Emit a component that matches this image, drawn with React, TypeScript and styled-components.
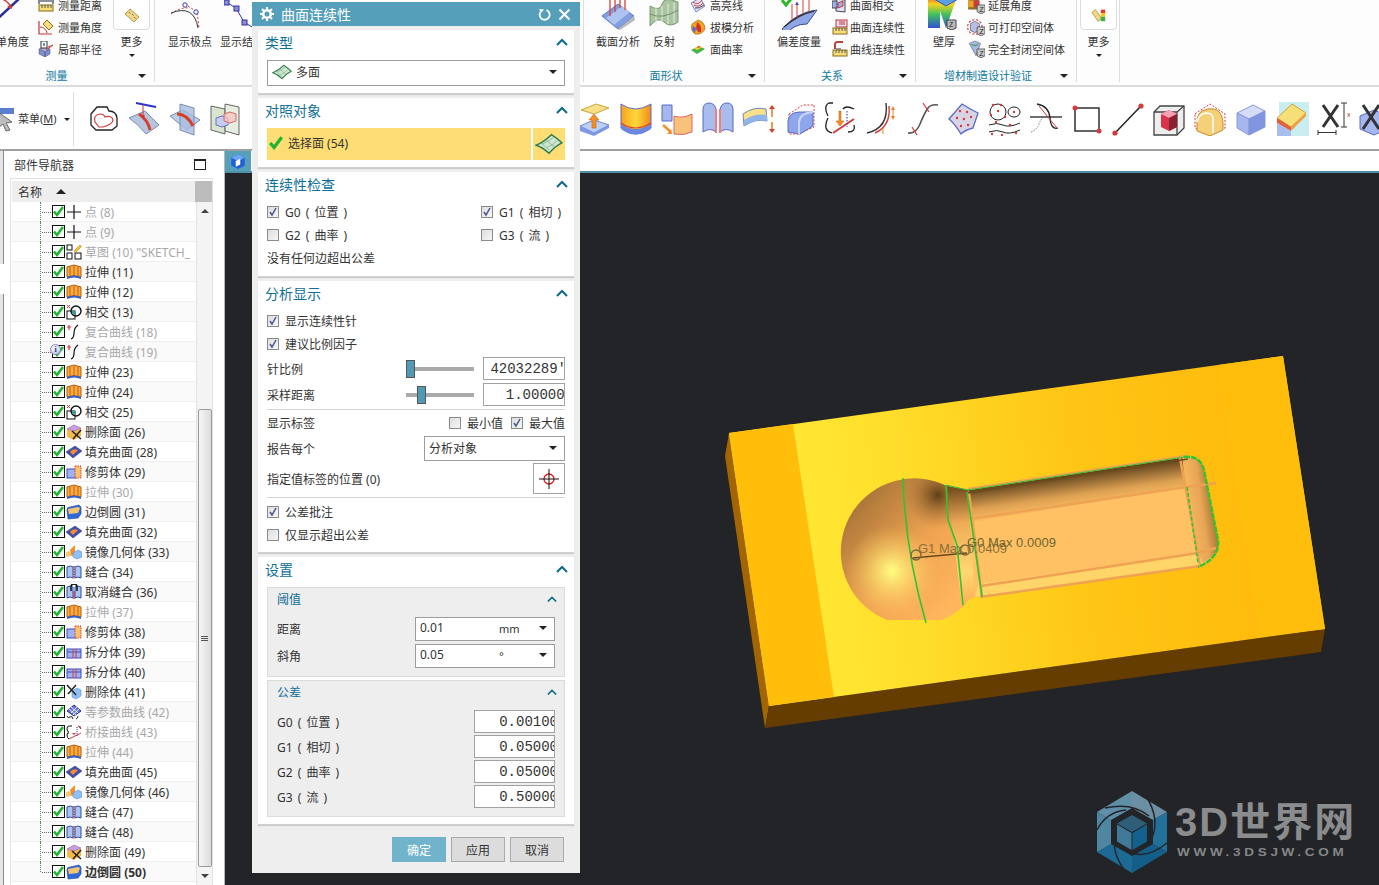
import React from "react";
import styled, { createGlobalStyle } from "styled-components";

const Global = createGlobalStyle`
  html, body { margin: 0; padding: 0; background: #fff; overflow: hidden; }
  * { box-sizing: border-box; }
  body { font-family: "Noto Sans", "Noto Sans CJK SC", sans-serif; color: #333; font-size: 12px; }
`;

const Page = styled.div`
  position: relative; width: 1379px; height: 885px; overflow: hidden; background: #fff;
  display: flex; flex-direction: column;
`;

/* ---------- ribbon ---------- */
const Ribbon = styled.div`
  height: 87px; flex: none; overflow: hidden; background: #fdfdfd; border-bottom: 2px solid #dcdcdc;
`;
const RibbonRow = styled.div`
  display: flex; margin-top: -6px; margin-left: -15px; width: 1500px; font-size: 11px;
`;
const RibbonGroup = styled.section<{ $w: number; $pl?: number; $last?: boolean }>`
  width: ${(p) => p.$w}px; flex: none; height: 88px; display: flex; flex-direction: column;
  border-right: ${(p) => (p.$last ? "none" : "1px solid #dedede")};
  padding-left: ${(p) => p.$pl ?? 0}px;
`;
const GroupBody = styled.div<{ $gap?: number }>`
  height: 71px; display: flex; gap: ${(p) => p.$gap ?? 0}px; align-items: flex-start;
`;
const GroupFoot = styled.div<{ $pl: number; $pr?: number }>`
  height: 17px; display: flex; margin-left: ${(p) => -p.$pl}px; line-height: 22px; color: #0d7a9f;
`;
const FootLabel = styled.span<{ $shift?: number }>`
  flex: 1; text-align: center; padding-right: ${(p) => p.$shift ?? 0}px;
`;
const Caret = styled.i<{ $size?: number }>`
  display: inline-block; flex: none; width: 0; height: 0;
  border-left: ${(p) => p.$size ?? 4}px solid transparent;
  border-right: ${(p) => p.$size ?? 4}px solid transparent;
  border-top: ${(p) => p.$size ?? 4}px solid #222;
`;
const FootCaret = styled(Caret)`
  margin: 9px 8px 0 0;
`;
const BigButton = styled.div<{ $w: number; $mr?: number }>`
  width: ${(p) => p.$w}px; flex: none; margin-right: ${(p) => p.$mr ?? 0}px;
  display: flex; flex-direction: column; align-items: center; white-space: nowrap;
`;
const BigIcon = styled.div`
  height: 36px; display: flex; align-items: flex-end; justify-content: center;
`;
const BigLabel = styled.div`
  height: 24px; line-height: 24px; color: #333;
`;
const MoreBox = styled.div`
  width: 37px; height: 36px; border: 1px solid #dcdcdc; border-radius: 4px; background: #fff;
  display: flex; align-items: center; justify-content: center; padding-top: 6px;
`;
const SmallColumn = styled.div<{ $mr?: number }>`
  display: flex; flex-direction: column; margin-right: ${(p) => p.$mr ?? 0}px;
`;
const SmallItem = styled.div<{ $gap: number }>`
  height: 22px; display: flex; align-items: center; gap: ${(p) => p.$gap}px; white-space: nowrap; color: #333;
`;

const Svg: React.FC<{ s?: number; w?: number; h?: number; v: string; children: React.ReactNode }> = ({ s = 16, w, h, v, children }) => (
  <svg width={w ?? s} height={h ?? s} viewBox={v} style={{ display: "block", flex: "none" }}>{children}</svg>
);

/* ribbon icons */
const IcAngleBig = () => (
  <Svg w={30} h={36} v="0 0 30 36">
    <path d="M0 30 L29 3" stroke="#2a2f9c" strokeWidth="2.5" />
    <path d="M4 4 Q14 4 19 13" stroke="#d63a3a" strokeWidth="1.5" fill="none" />
    <path d="M20 15 l-5 -2 l4 -3z" fill="#d63a3a" />
  </Svg>
);
const IcDist = () => (
  <Svg v="0 0 16 16">
    <path d="M1 1v6M15 1v6" stroke="#111" />
    <path d="M2 4h12" stroke="#223" />
    <rect x="1" y="8" width="14" height="6" fill="#f6dd78" stroke="#8a6d1d" />
    <path d="M4 8v3M7 8v3M10 8v3M13 8v3" stroke="#555" />
  </Svg>
);
const IcMAngle = () => (
  <Svg v="0 0 16 16">
    <path d="M1 2V15H14" fill="none" stroke="#c9332e" strokeWidth="1.2" />
    <path d="M2 8 A7 7 0 0 1 9 14" fill="none" stroke="#c9332e" />
    <path d="M5 5l4-4 6 6-4 4z" fill="#f6dd78" stroke="#8a6d1d" />
  </Svg>
);
const IcRadius = () => (
  <Svg v="0 0 16 16">
    <path d="M1 8l6-2 5 2-5 3z" fill="#a4b4e8" stroke="#555" strokeWidth=".5" />
    <path d="M1 8v5l6 3v-5zM7 11v5l5-3V8z" fill="#7b8fd6" stroke="#555" strokeWidth=".5" />
    <rect x="3" y="0" width="6" height="7" fill="#fff" stroke="#333" />
    <path d="M6 2v3" stroke="#2a5fb0" strokeWidth="1.4" />
    <path d="M8 9L15 4 10 6" stroke="#d63a3a" fill="none" />
  </Svg>
);
const IcRuler = () => (
  <Svg v="0 0 16 16">
    <path d="M1 7L6 2 15 10 10 15z" fill="#f0d888" stroke="#b6994a" />
    <path d="M5 5l1.5 1.5M8 7l1.5 1.5M10 10l1.5 1.5" stroke="#666" />
  </Svg>
);
const IcRulerRainbow = () => (
  <Svg v="0 0 18 18">
    <path d="M1 6L5 3 12 13 8 16z" fill="#f0d888" stroke="#b6994a" />
    <rect x="11" y="3" width="5" height="4" fill="#e23b2e" />
    <rect x="11" y="7" width="5" height="4" fill="#f7c325" />
    <rect x="11" y="11" width="5" height="5" fill="#3fb24a" />
  </Svg>
);
const IcPoles = () => (
  <Svg w={40} h={30} v="0 0 40 30">
    <path d="M1 14 Q10 7 20 8" stroke="#c33" strokeDasharray="2 2" fill="none" />
    <circle cx="15" cy="5" r="2.2" fill="#fff" stroke="#33a" />
    <path d="M1 13 Q24 4 28 28" stroke="#333" fill="none" />
    <path d="M18 6 L27 12 L29 28" stroke="#c33" strokeDasharray="2 2" fill="none" />
    <circle cx="26" cy="12" r="2.2" fill="#fff" stroke="#33a" />
  </Svg>
);
const IcKnots = () => (
  <Svg w={36} h={30} v="0 0 36 30">
    <path d="M2 2 L12 8 L20 22 L28 27" stroke="#33a" fill="none" />
    <rect x="0" y="0" width="5" height="5" fill="#8a8ad8" stroke="#33a" />
    <rect x="10" y="6" width="5" height="5" fill="#8a8ad8" stroke="#33a" />
    <rect x="18" y="20" width="5" height="5" fill="#8a8ad8" stroke="#33a" />
  </Svg>
);
const IcSection = () => (
  <Svg w={36} h={36} v="0 0 36 36">
    <path d="M2 22 L18 10 L34 22 L18 35z" fill="#7f9fe0" stroke="#5c77c0" />
    <path d="M6 24L22 12l8 6-16 13z" fill="#aec3ef" />
    <path d="M10 22V4M15 18V1M20 14V1M25 16V4" stroke="#d6403a" strokeWidth="1.3" />
    <path d="M10 5 Q17 -2 25 5" stroke="#d6403a" fill="none" />
    <path d="M18 35 L34 22 L35 26 L20 36z" fill="#b8b8b8" />
  </Svg>
);
const IcReflect = () => (
  <Svg w={32} h={30} v="0 0 32 30">
    <path d="M2 6 Q12 12 14 4 T30 2 L30 22 Q22 28 16 22 T2 26z" fill="#a9c49f" stroke="#7a9a72" />
    <path d="M8 8v18M14 6v18M20 4v20M26 3v20" stroke="#e6efe0" />
    <path d="M2 14 Q14 20 30 10" stroke="#6e8e64" fill="none" />
  </Svg>
);
const IcHigh = () => (
  <Svg v="0 0 16 16">
    <path d="M1 6L10 1 15 9 6 15z" fill="#dfe3f6" stroke="#7a86c8" />
    <path d="M3 5Q8 9 12 3M4 8Q9 11 13 6" stroke="#d6403a" fill="none" />
    <path d="M5 11Q9 12 14 8" stroke="#444" fill="none" />
  </Svg>
);
const IcDraft = () => (
  <Svg v="0 0 16 16">
    <path d="M8 1Q15 3 15 10 12 16 5 15 0 11 2 5z" fill="#f5a41d" stroke="#8a5a10" strokeWidth=".6" />
    <path d="M7 3Q12 6 11 13 7 14 6 9z" fill="#d2322e" />
    <path d="M3 7l3 2-1 5-3-3z" fill="#5a6ad0" />
  </Svg>
);
const IcCurv = () => (
  <Svg v="0 0 16 16">
    <path d="M1 9L9 5 15 8 7 13z" fill="#46b04d" />
    <path d="M4 7.5L9 5 12 6.5 7 9z" fill="#f3d321" />
    <path d="M7 6.2L9 5 10.5 5.8 8.5 7z" fill="#e23b2e" />
  </Svg>
);
const IcDeviation = () => (
  <Svg w={40} h={36} v="0 0 40 36">
    <path d="M3 35 Q18 18 38 16 L28 30 Q14 30 8 40z" fill="#8fa6e6" stroke="#3a4c96" />
    <path d="M5 33 Q20 20 35 17" stroke="#333" strokeWidth="1.4" fill="none" />
    <path d="M13 10v16M18 8v16M24 4v16M30 6v12" stroke="#d6403a" />
    <path d="M18 8l-2 3h4zM24 2l-2 3h4z" fill="#3250c0" />
    <path d="M3 6l4 5 9-11" fill="none" stroke="#2eb82e" strokeWidth="3" />
  </Svg>
);
const IcFaceX = () => (
  <Svg v="0 0 16 16">
    <path d="M4 2l9 1v12l-9-1z" fill="#e0e4f5" stroke="#445" />
    <path d="M6 6l5-2v5l-5 2z" fill="#9eb0e6" stroke="#c33" />
    <rect x="0" y="4" width="5" height="7" fill="#9eb0e6" stroke="#445" />
  </Svg>
);
const IcFaceCont = () => (
  <Svg v="0 0 16 16">
    <rect x="4" y="1" width="11" height="7" fill="#dde2f4" stroke="#c33" />
    <path d="M7 3h6M7 5h6" stroke="#c33" />
    <rect x="1" y="9" width="14" height="6" fill="#f6dd78" stroke="#8a6d1d" />
    <path d="M4 9v3M7 9v3M10 9v3M13 9v3" stroke="#555" />
  </Svg>
);
const IcCurveCont = () => (
  <Svg v="0 0 16 16">
    <path d="M3 8V3Q3 1 6 1h5" fill="none" stroke="#b5443c" strokeWidth="2" />
    <path d="M4 8h5" stroke="#333" />
    <rect x="1" y="9" width="14" height="6" fill="#f6dd78" stroke="#8a6d1d" />
    <path d="M4 9v3M7 9v3M10 9v3M13 9v3" stroke="#555" />
  </Svg>
);
const IcWall = () => (
  <Svg w={32} h={36} v="0 0 32 36">
    <defs>
      <linearGradient id="wallg" x1="0" y1="0" x2="0" y2="1">
        <stop offset="0" stopColor="#e53828" /><stop offset=".3" stopColor="#f7d321" />
        <stop offset=".6" stopColor="#3fc25a" /><stop offset="1" stopColor="#3050d8" />
      </linearGradient>
    </defs>
    <path d="M0 0H12V34H0z" fill="url(#wallg)" />
    <path d="M6 0H30L18 34z" fill="url(#wallg)" />
    <path d="M6 5L18 -1 30 5 18 12z" fill="#5aa0e0" stroke="#2a5fb0" />
    <path d="M19 26h9v8l-4 2-5-2z" fill="#bbb" stroke="#444" />
    <text x="21" y="33" fontSize="7" fill="#222" fontFamily="Liberation Sans">Z</text>
  </Svg>
);
const ZBadge = () => (
  <>
    <path d="M9 8h7v6l-3.5 2L9 14z" fill="#ccc" stroke="#444" strokeWidth=".7" />
    <text x="10.8" y="14" fontSize="6.5" fill="#222" fontFamily="Liberation Sans">Z</text>
  </>
);
const IcExt = () => (
  <Svg s={18} v="0 0 16 16">
    <path d="M1 4L6 2l5 2v8H1z" fill="#8c6a2c" /><path d="M1 4h5v6H1z" fill="#e8a22a" />
    <path d="M6 4h5v6H6z" fill="#cf3a3a" /><ZBadge />
  </Svg>
);
const IcPrint = () => (
  <Svg s={18} v="0 0 16 16">
    <circle cx="7" cy="8" r="6.5" fill="none" stroke="#d63a3a" strokeDasharray="2 1.5" />
    <path d="M3 5l4-2 4 2v6l-4 2-4-2z" fill="#b7bfe8" stroke="#555" strokeWidth=".6" />
    <ZBadge />
  </Svg>
);
const IcClosed = () => (
  <Svg s={18} v="0 0 16 16">
    <path d="M2 3l5-2 5 2-4 11z" fill="#aab8e6" stroke="#667" strokeWidth=".6" />
    <path d="M4 4l3 1 3-1" stroke="#3aa05a" fill="none" />
    <ZBadge />
  </Svg>
);

const Small: React.FC<{ icon: React.ReactNode; gap: number; children: React.ReactNode }> = ({ icon, gap, children }) => (
  <SmallItem $gap={gap}>{icon}<span>{children}</span></SmallItem>
);

/* ---------- toolbar ---------- */
const Toolbar = styled.div`
  height: 64px; flex: none; display: flex; align-items: center; overflow: hidden; background: #fff;
  border-bottom: 2px solid #a0a0a0;
`;
const MenuButton = styled.div`
  width: 74px; height: 54px; flex: none; display: flex; align-items: center; border-right: 1px solid #ddd;
  font-size: 11px; margin-right: 9px; margin-top: 2px;
`;
const MenuLabel = styled.span`
  margin-left: 2px; margin-right: 7px; white-space: nowrap; padding-bottom: 2px;
  u { text-decoration: underline; }
`;
const ToolIcon = styled.div`
  width: 41px; height: 36px; flex: none; display: flex; align-items: center; justify-content: center; margin-top: 2px;
`;
const ToolGap = styled.div`
  width: 327px; flex: none;
`;
const T: React.FC<{ children: React.ReactNode }> = ({ children }) => (
  <ToolIcon><Svg s={34} v="0 0 34 34">{children}</Svg></ToolIcon>
);
const toolLeft = [
  <T key="a"><path d="M4 12L10 5H20L22 9Q29 9 30 16V24L25 28H9L4 23z" fill="#fff" stroke="#222" strokeWidth="1.3" /><path d="M8 20Q6 13 13 12 17 12 18 15 25 13 26 18 26 22 16 25H12z" fill="#fff" stroke="#d63a3a" strokeWidth="1.2" /></T>,
  <T key="b"><path d="M8 1l20 4" stroke="#2a35d0" strokeWidth="2" /><path d="M1 16L17 9 31 23 18 32Q10 22 1 16z" fill="#b6c6e0" stroke="#7a8cb0" /><path d="M11 12Q20 18 22 28" stroke="#d6402a" strokeWidth="3" fill="none" /><path d="M15 3v12" stroke="#c33" /><path d="M15 17l-2-4h4z" fill="#c33" /></T>,
  <T key="c"><path d="M1 14L14 8 31 18 18 28z" fill="#bcd0ea" stroke="#7a8cb0" /><path d="M11 2l14 4v27l-14-5z" fill="#a8bde0" fillOpacity=".8" stroke="#7a8cb0" /><path d="M8 12Q18 12 24 24" stroke="#d6402a" strokeWidth="3" fill="none" /></T>,
  <T key="d"><path d="M1 4l14 3v25L1 28z" fill="#d8e6d0" stroke="#666" /><path d="M15 2l14 3v28l-14-4z" fill="#dfead8" fillOpacity=".8" stroke="#666" /><path d="M6 16l6-2 6 2v7l-6 2-6-2z" fill="#c6cdf2" stroke="#6a74c0" /><path d="M14 12l6-2 6 2v7l-6 2-6-2z" fill="#f4c6c0" fillOpacity=".8" stroke="#d66" /></T>,
];
const toolRight = [
  <T key="1"><path d="M3 8L18 2l13 4-15 6z" fill="#f7df88" stroke="#c9a83a" /><path d="M2 24L16 18l15 5-15 8z" fill="#bcd0f5" stroke="#6e86d0" /><path d="M2 24v5l14 5 15-8v-3l-15 8z" fill="#7e98e6" /><path d="M14 26v-8h-3l5-6 5 6h-3v8z" fill="#f59028" stroke="#b35a00" strokeWidth=".5" /></T>,
  <T key="2"><defs><linearGradient id="tl2" x1="0" x2="1"><stop offset="0" stopColor="#f7a020" /><stop offset=".5" stopColor="#ffd83a" /><stop offset="1" stopColor="#f08a1a" /></linearGradient></defs><path d="M2 2Q16 12 32 2V26Q16 38 2 26z" fill="url(#tl2)" stroke="#5a6ac0" /><path d="M2 22Q16 32 32 22V27Q16 38 2 27z" fill="#6d87e0" /><path d="M2 21Q16 31 32 21" stroke="#d6402a" strokeWidth="1.2" fill="none" /></T>,
  <T key="3"><path d="M2 3h10v16H2z" fill="#a4b8ee" stroke="#5a6ac0" /><path d="M14 14q8 3 18-2v18q-9 4-18 2z" fill="#f9c27a" stroke="#d66" /><path d="M3 23l8 7" stroke="#f59028" strokeWidth="2.5" /><path d="M12 32l-5 0 4-5z" fill="#f59028" /></T>,
  <T key="4"><path d="M2 30V8Q2 1 8 1t7 7v22q-6-5-13 0z" fill="#a8bcee" stroke="#5a6ac0" /><path d="M32 30V8Q32 1 26 1t-7 7v22q6-5 13 0z" fill="#a8bcee" stroke="#5a6ac0" /><path d="M15 7v24M19 7v24" stroke="#f08080" strokeWidth="2" /></T>,
  <T key="5"><path d="M1 12Q12 4 24 7l1 12Q14 16 2 24z" fill="#fbe08a" stroke="#6d87c0" /><path d="M2 18Q14 11 25 13l0 6Q14 16 2 24z" fill="#8fb4e8" /><path d="M30 6v9M30 20v9" stroke="#e88428" strokeWidth="1.6" /><path d="M30 3l-3 4h6zM30 31l-3-4h6z" fill="#d6402a" /></T>,
  <T key="6"><path d="M6 12L20 3h11v22L15 32H6z" fill="none" stroke="#d63a3a" strokeDasharray="2 1.5" /><path d="M5 30V19Q6 10 17 10H30v14L17 32z" fill="#8ea6ec" stroke="#5a6ac0" /><path d="M16 32V20q1-9 14-10" stroke="#c8d4f8" strokeWidth="2" fill="none" /></T>,
  <T key="7"><path d="M4 14Q-1 4 5 1h4M4 16Q-2 28 8 31" stroke="#222" strokeWidth="1.3" fill="none" /><path d="M30 7Q22 3 19 7M24 30q8 0 6-7" stroke="#222" strokeWidth="1.3" fill="none" /><path d="M9 31l21-14" stroke="#d63a3a" strokeWidth="2" /><path d="M23 9v16" stroke="#33a" strokeDasharray="1.5 1.5" /><path d="M15 9v10h-3l4 5 4-5h-3V9z" fill="#f59028" stroke="#b35a00" strokeWidth=".5" /></T>,
  <T key="8"><path d="M2 31Q24 26 21 1" stroke="#333" strokeWidth="1.4" fill="none" /><path d="M10 31Q26 24 24 4" stroke="#d63a3a" strokeWidth="1.4" fill="none" /><path d="M28 6v10" stroke="#e88428" /><path d="M28 4l-2 4h4zM28 18l-2-4h4z" fill="#e88428" /><path d="M18 26v6" stroke="#e88428" /></T>,
  <T key="9"><path d="M2 31Q10 32 14 22T22 6q3-4 10-3" stroke="#555" strokeWidth="1.6" fill="none" /><path d="M6 25l5 8M17 1l6 9" stroke="#d63a3a" strokeWidth="1.2" /></T>,
  <T key="10"><path d="M2 17L15 2q8 5 16 9L26 26q-8 2-12 6Q8 22 2 17z" fill="#d9d3e6" stroke="#5a6ac0" strokeWidth="1.3" /><g fill="#d63a3a"><circle cx="13" cy="9" r="1.2" /><circle cx="20" cy="10" r="1.2" /><circle cx="10" cy="16" r="1.2" /><circle cx="17" cy="17" r="1.2" /><circle cx="24" cy="15" r="1.2" /><circle cx="14" cy="24" r="1.2" /><circle cx="21" cy="23" r="1.2" /></g></T>,
  <T key="11"><ellipse cx="10" cy="10" rx="8" ry="8" fill="none" stroke="#222" /><ellipse cx="26" cy="10" rx="6" ry="5" fill="none" stroke="#222" /><path d="M1 23q8-3 14 0t17-2M1 30q8-3 14 0t17-2" stroke="#222" fill="none" /><g fill="#d63a3a"><circle cx="5" cy="3" r="1.2" /><circle cx="13" cy="3" r="1.2" /><circle cx="10" cy="9" r="1.2" /><circle cx="3" cy="13" r="1.2" /><circle cx="26" cy="10" r="1.2" /><circle cx="17" cy="15" r="1.2" /><circle cx="8" cy="20" r="1.2" /><circle cx="22" cy="23" r="1.2" /><circle cx="4" cy="32" r="1.2" /><circle cx="14" cy="33" r="1.2" /><circle cx="28" cy="31" r="1.2" /></g></T>,
  <T key="12"><path d="M8 2q12 2 13 14t8 10" stroke="#222" strokeWidth="1.3" fill="none" /><path d="M1 15h32" stroke="#222" strokeWidth="1.3" /><path d="M10 4l18 22" stroke="#d63a3a" strokeWidth="1" /><path d="M2 30q6-2 8-8t6-7" stroke="#777" strokeDasharray="1.5 1.2" fill="none" /></T>,
  <T key="13"><rect x="5" y="6" width="24" height="23" fill="none" stroke="#222" strokeWidth="1.4" /><circle cx="5" cy="6" r="2.5" fill="#d63a3a" /><circle cx="29" cy="29" r="2.5" fill="#d63a3a" /></T>,
  <T key="14"><path d="M4 31L30 4" stroke="#222" strokeWidth="1.5" /><circle cx="4" cy="31" r="2.6" fill="#d63a3a" /><circle cx="30" cy="4" r="2.6" fill="#d63a3a" /></T>,
  <T key="15"><path d="M8 4h24v22l-7 7H2V10z" fill="#eee" stroke="#444" strokeWidth="1.3" /><path d="M2 10h23v23M25 10l7-6" stroke="#444" strokeWidth="1.3" fill="none" /><path d="M9 12l8-4 8 4v13l-8 4-8-4z" fill="#d8334a" /><path d="M9 12l8-4 8 4-8 4z" fill="#f6a0b4" /><path d="M17 16v13l8-4V12z" fill="#8a2030" /></T>,
  <T key="16"><path d="M2 12l15-10 15 10v14L17 33 2 26z" fill="none" stroke="#d63a3a" strokeDasharray="2 1.5" /><path d="M4 29V19Q5 9 12 8q3-2 9-1 8 2 9 13v8L17 34z" fill="#f6d078" stroke="#c88a2a" /><path d="M4 20q2-8 9-9 7 0 7 6v14" stroke="#fff" strokeWidth="1.5" fill="none" /></T>,
  <T key="17"><path d="M3 11L19 3l12 6-16 8z" fill="#d5dcf8" stroke="#8a98d8" /><path d="M3 11v15l12 7V17z" fill="#a6b6ee" stroke="#8a98d8" /><path d="M15 17v16l16-8V9z" fill="#7f95e0" stroke="#8a98d8" /></T>,
  <T key="18"><rect x="4" y="0" width="30" height="34" fill="#c8eef2" /><path d="M2 16L17 2l14 9-15 14z" fill="#f7df78" stroke="#d6a040" /><path d="M2 16l14 9v4L2 21z" fill="#e2603a" /><path d="M16 25l15-14v3L16 29z" fill="#f0a040" /><path d="M2 21l14 8v5H2z" fill="#a8bcee" /></T>,
  <T key="19"><path d="M7 3l15 22M22 3L7 25" stroke="#333" strokeWidth="3" /><path d="M2 28v5M20 28v5M2 30.500h18M25 1h6M25 25h6M28 1v24" stroke="#333" /><text x="31" y="15" fontSize="8" fill="#c33" fontFamily="Liberation Sans">x</text></T>,
  <T key="20"><path d="M3 14l14-6 14 6v13l-14 6-14-6z" fill="#a6b6ee" stroke="#5a6ac0" /><path d="M6 3l16 24M22 3L6 27" stroke="#333" strokeWidth="3" /></T>,
];

/* ---------- lower area ---------- */
const Main = styled.div`
  flex: 1; min-height: 0; display: flex;
`;
const Rail = styled.div`
  width: 4px; flex: none; display: flex; flex-direction: column; gap: 30px; background: #fff;
`;
const RailPiece = styled.div<{ $grow?: boolean }>`
  background: #e6e6e6; border-right: 1px solid #888;
  ${(p) => (p.$grow ? "flex: 1;" : "height: 113px;")}
`;
const Navigator = styled.aside`
  width: 221px; flex: none; display: flex; flex-direction: column; border-right: 1px solid #b8b8b8; padding-left: 6px;
`;
const NavTitle = styled.div`
  height: 27px; display: flex; align-items: center; justify-content: space-between;
  padding: 0 18px 0 4px; font-size: 12px; color: #333;
`;
const MaximizeBox = styled.span`
  width: 12px; height: 11px; border: 1px solid #222; border-top-width: 2px;
`;
const NavFrame = styled.div`
  width: 203px; flex: 1; min-height: 0; border: 1px solid #e2e2e2; border-bottom: none; padding: 2px 0 0 1px; overflow: hidden;
`;
const GridHead = styled.div`
  height: 21px; display: flex; background: #eee;
`;
const NameCell = styled.div`
  flex: 1; display: flex; align-items: center; gap: 14px; padding-left: 6px; color: #333; font-size: 12px;
`;
const UpTri = styled.i`
  width: 0; height: 0; border-left: 5px solid transparent; border-right: 5px solid transparent; border-bottom: 5px solid #222;
`;
const ScrollUp = styled.i`
  width: 0; height: 0; border-left: 4px solid transparent; border-right: 4px solid transparent; border-bottom: 4px solid #444;
`;
const HeadEnd = styled.div`
  width: 17px; background: #bcbcbc;
`;
const GridBody = styled.div`
  display: flex;
`;
const Rows = styled.div`
  width: 184px; flex: none; overflow: hidden;
`;
const TreeRow = styled.div<{ $alt: boolean }>`
  position: relative; height: 20px; display: flex; align-items: center; padding-left: 28px; white-space: nowrap;
  background: ${(p) => (p.$alt ? "#fafafa" : "#fff")}; border-bottom: 1px solid #efefef;
`;
const Connector = styled.span<{ $last?: boolean }>`
  align-self: flex-start; width: 12px; height: ${(p) => (p.$last ? "10px" : "20px")}; flex: none; position: relative;
  border-left: 1px dotted #5d8a5d;
  &::after { content: ""; position: absolute; left: 1px; top: 10px; width: 9px; border-top: 1px dotted #666; }
`;
const Check = styled.span`
  width: 13px; height: 13px; flex: none; border: 1px solid #111; background: #fff; display: flex; align-items: center; justify-content: center;
`;
const NodeIcon = styled.span`
  width: 16px; height: 16px; flex: none; margin-left: 1px; margin-right: 3px; position: relative;
`;
const InfoBadge = styled.span`
  position: absolute; left: 38px; top: 2px; width: 11px; height: 11px; border-radius: 50%;
  background: radial-gradient(circle at 40% 30%, #fff, #b9bde6); border: 1px solid #8a8ac0;
  font: bold 8px/9px "Liberation Serif", serif; color: #22307a; text-align: center;
`;
const NodeText = styled.span<{ $muted?: boolean; $bold?: boolean }>`
  color: ${(p) => (p.$muted ? "#a8a8a8" : "#333")}; font-weight: ${(p) => (p.$bold ? 700 : 400)}; font-size: 12px;
`;
const ScrollBar = styled.div`
  width: 16px; flex: none; height: 683px; display: flex; flex-direction: column; align-items: center; background: #f4f4f4; border-left: 1px solid #e2e2e2;
`;
const ScrollEnd = styled.div`
  height: 18px; flex: none; display: flex; align-items: center; justify-content: center;
`;
const ScrollSpace = styled.div`
  height: 189px; flex: none;
`;
const ScrollThumb = styled.div`
  width: 14px; flex: 1; background: linear-gradient(90deg, #f6f6f6, #dcdcdc); border: 1px solid #9a9a9a; border-radius: 2px;
  display: flex; flex-direction: column; align-items: center; justify-content: center; gap: 1px;
`;
const GripLine = styled.i`
  width: 7px; height: 1px; background: #555;
`;
const DownTri = styled(Caret)`
  border-top-color: #444;
`;

const Workspace = styled.main`
  flex: 1; min-width: 0; display: flex; flex-direction: column;
`;
const TabStrip = styled.div`
  height: 22px; flex: none; display: flex; background: #fff; border-bottom: 2px solid #4f90aa;
`;
const PartTab = styled.div`
  width: 26px; background: #58a0ba; display: flex; align-items: center; justify-content: center;
`;
const Canvas = styled.div`
  flex: 1; min-height: 0; position: relative; background: #232428;
`;
const CanvasSvg = styled.svg`
  display: block; width: 100%; height: 100%;
`;
const Watermark = styled.div`
  position: absolute; left: 871px; top: 617px; display: flex; gap: 7px; align-items: flex-start;
`;
const MarkText = styled.div`
  display: flex; flex-direction: column; margin-top: 9px;
`;
const MarkTitle = styled.div`
  font: 700 40px/46px "Liberation Sans", "Noto Sans CJK SC", sans-serif; color: #8a8c8e; white-space: nowrap; letter-spacing: 2px;
`;
const MarkSub = styled.div`
  font: 700 13.500px/14px "Liberation Sans", sans-serif; color: #858789; letter-spacing: 3.700px; white-space: nowrap; margin-top: 1px; margin-left: 2px; transform: scaleY(.8);
`;

/* ---------- dialog ---------- */
const Dialog = styled.div`
  position: absolute; left: 252px; top: 2px; width: 328px; height: 871px; background: #eee; display: flex; flex-direction: column;
`;
const TitleBar = styled.div`
  height: 24px; flex: none; background: #569fba; color: #fff; display: flex; align-items: center; padding: 0 9px 0 8px; font-size: 14px;
`;
const TitleText = styled.span`
  flex: 1; margin-left: 7px;
`;
const TitleTools = styled.div`
  display: flex; gap: 7px; align-items: center;
`;
const Sections = styled.div`
  padding: 4px 6px 0; display: flex; flex-direction: column; gap: 4px;
`;
const Section = styled.section<{ $h: number }>`
  height: ${(p) => p.$h}px; background: #fff; border-bottom: 1px solid #cfcfcf; box-shadow: 0 1px 1px #ccc; padding: 0 9px;
`;
const SectionHead = styled.header`
  height: 26px; display: flex; align-items: center; justify-content: space-between; margin-left: -2px; margin-right: -3px;
  color: #0d6f97; font-size: 14px; padding-bottom: 2px;
`;
const Chevron: React.FC<{ s?: number }> = ({ s = 12 }) => (
  <Svg w={s} h={8} v="0 0 12 8"><path d="M1 7L6 2l5 5" fill="none" stroke="#0b6a8a" strokeWidth="2" /></Svg>
);
const SelectBox = styled.div<{ $w?: number; $h?: number; $mt?: number }>`
  height: ${(p) => p.$h ?? 26}px; width: ${(p) => (p.$w ? p.$w + "px" : "100%")}; margin-top: ${(p) => p.$mt ?? 0}px;
  border: 1px solid #9c9c9c; background: #fff; display: flex; align-items: center; padding: 0 7px 2px 4px; gap: 4px; font-size: 12px; color: #333; flex: none;
`;
const Grow = styled.span`
  flex: 1;
`;
const YellowRow = styled.div`
  margin-top: 4px; height: 32px; display: flex; gap: 2px;
`;
const YellowBar = styled.div`
  flex: 1; background: #fedd75; display: flex; align-items: center; gap: 5px; padding: 0 0 2px 2px; font-size: 12px; color: #333;
`;
const YellowButton = styled.div`
  width: 32px; background: #fedd75; display: flex; align-items: center; justify-content: center;
`;
const Row = styled.div<{ $h?: number; $mt?: number }>`
  height: ${(p) => p.$h ?? 23}px; margin-top: ${(p) => p.$mt ?? 0}px; display: flex; align-items: center; justify-content: space-between; font-size: 12px; color: #333; white-space: nowrap;
`;
const CheckGrid = styled.div`
  display: grid; grid-template-columns: 214px 1fr; margin-top: 2px;
`;
const CheckLine = styled.label`
  height: 23px; display: flex; align-items: center; gap: 6px; font-size: 12px; color: #333; white-space: nowrap;
`;
const Tick = styled.span`
  width: 12px; height: 12px; flex: none; border: 1px solid #8a8a8a; background: linear-gradient(135deg, #dedede, #f6f6f6); display: flex; align-items: center; justify-content: center;
`;
const Box: React.FC<{ on?: boolean; children: React.ReactNode }> = ({ on, children }) => (
  <CheckLine>
    <Tick>{on && <Svg s={10} v="0 0 10 10"><path d="M2 5l2 3 4-7" fill="none" stroke="#46558f" strokeWidth="1.500" /></Svg>}</Tick>
    <span>{children}</span>
  </CheckLine>
);
const SpacedLabel = styled.span`
  word-spacing: 2px;
`;
const StackedChecks = styled.div`
  margin-top: 2px;
`;
const RightControls = styled.div<{ $gap?: number }>`
  display: flex; align-items: center; gap: ${(p) => p.$gap ?? 9}px;
`;
const Slider = styled.div`
  width: 68px; height: 4px; background: #aaa; position: relative;
`;
const SliderThumb = styled.span<{ $left: number }>`
  position: absolute; left: ${(p) => p.$left}px; top: -7px; width: 9px; height: 18px; background: #519ab6; border: 1px solid #555;
`;
const NumberField = styled.div<{ $w: number; $h?: number }>`
  width: ${(p) => p.$w}px; height: ${(p) => p.$h ?? 23}px; flex: none; border: 1px solid #a2a2a2; background: #fff; display: flex; justify-content: flex-end; align-items: center; overflow: hidden;
  font: 14px/18px "Liberation Mono", monospace; color: #333;
`;
const NumberText = styled.span<{ $cut: number }>`
  margin-right: ${(p) => -p.$cut}px; flex: none;
`;
const Divider = styled.hr<{ $mt: number }>`
  border: none; height: 1px; background: #d6d6d6; margin: ${(p) => p.$mt}px 0 0;
`;
const Crosshair = styled.div`
  width: 32px; height: 31px; border: 1px solid #a2a2a2; background: #fff; display: flex; align-items: center; justify-content: center;
`;
const Inner = styled.div<{ $h: number }>`
  height: ${(p) => p.$h}px; background: #eee; border: 1px solid #dcdcdc; padding: 0 9px; flex: none;
`;
const InnerHead = styled.header`
  height: 22px; display: flex; align-items: center; justify-content: space-between; color: #0d6f97; font-size: 12px; margin-right: -2px;
`;
const InnerStack = styled.div`
  display: flex; flex-direction: column; gap: 3px; margin-top: 4px;
`;
const UnitText = styled.span`
  width: 36px; font-size: 11px;
`;
const ValueText = styled.span`
  flex: 1; padding-bottom: 1px;
`;
const Actions = styled.div`
  margin-top: 12px; display: flex; justify-content: flex-end; gap: 5px; padding-right: 16px;
`;
const ActionButton = styled.button<{ $primary?: boolean }>`
  width: 54px; height: 25px; padding: 0; font: 12px "Noto Sans", "Noto Sans CJK SC", sans-serif;
  background: ${(p) => (p.$primary ? "#70b3cb" : "#dcdcdc")}; color: ${(p) => (p.$primary ? "#fff" : "#333")};
  border: 1px solid ${(p) => (p.$primary ? "#70b3cb" : "#aaa")};
`;

/* node icons */
const nodeIcons: Record<string, React.ReactNode> = {
  point: <path d="M8 1v14M1 8h14" stroke="#111" strokeWidth="1.2" />,
  sketch: <><rect x="1" y="1" width="5" height="5" fill="#fff" stroke="#111" /><rect x="1" y="9" width="5" height="6" fill="#fff" stroke="#111" /><rect x="9" y="9" width="6" height="6" fill="#fff" stroke="#111" /><path d="M8 7l6-6 1.500 1.500-6 6z" fill="#f5c421" stroke="#b3661f" strokeWidth=".5" /></>,
  extrude: <><path d="M1 3l7-2 7 2v10q-7-3-14 0z" fill="#f9ad44" stroke="#b4590a" /><path d="M4 2.500v10M8 2v10M12 2.500v10" stroke="#c4600a" /><path d="M1 13q7-3 14 0v2q-7-3-14 0z" fill="#3560c8" /></>,
  intersect: <><rect x="1" y="7" width="8" height="8" fill="#fff" stroke="#111" /><circle cx="10" cy="7" r="5" fill="none" stroke="#111" strokeWidth="1.4" /><rect x="6" y="7" width="3" height="3" fill="#2aa0a0" /><path d="M1 1l3 3M4 1L1 4" stroke="#d63a3a" /></>,
  curve: <><path d="M5 15q3-1 3-6t4-8" stroke="#111" strokeWidth="1.2" fill="none" /><path d="M3 1v5M1 3h4" stroke="#d63a3a" strokeWidth="1.2" /></>,
  delFace: <><path d="M1 5l7-4 7 3v8l-7 4-7-3z" fill="#f6b84c" /><path d="M1 5l7-4 7 3-7 3z" fill="#c8a0e0" stroke="#8a5ac0" strokeWidth=".5" /><path d="M6 7l9 8M15 6l-8 9" stroke="#222" strokeWidth="1.5" /></>,
  fill: <><path d="M0 8l9-6 7 5-9 7z" fill="#3f4fb0" stroke="#2a3580" strokeWidth=".5" /><path d="M4 8q3-4 8-2l-5 5z" fill="#f59028" /></>,
  trim: <><rect x="1" y="5" width="9" height="9" fill="#9db2f2" stroke="#3a4fc0" /><rect x="9" y="2" width="6" height="12" fill="#f6c26c" stroke="#d63a3a" strokeDasharray="1.500 1" /></>,
  blend: <><path d="M1 6q0-3 3-3l9-2 2 2v7l-3 4-10 1z" fill="#2f6bd8" stroke="#1a3f9c" strokeWidth=".6" /><path d="M2 5l10-2 2 1-2 5-9 1z" fill="#f9c46c" /></>,
  mirror: <><path d="M9 1L4 6v6l5-1z" fill="#f59028" /><path d="M0 8l5-1v5l-5 1z" fill="#f7c86c" /><path d="M7 9l5-3 4 2v5l-5 2-4-2z" fill="#8ec0f5" stroke="#4a80d0" strokeWidth=".5" /></>,
  sew: <><path d="M1 14V3q4-2 6 0v11q-3-2-6 0zM15 14V3q-4-2-6 0v11q3-2 6 0z" fill="#a8c4f0" stroke="#2a4fa8" /><path d="M8 2v13" stroke="#d63a3a" strokeWidth="1.600" strokeDasharray="1.500 1" /></>,
  unsew: <><path d="M1 14V3q4-2 6 0v11q-3-2-6 0zM15 14V3q-4-2-6 0v11q3-2 6 0z" fill="#a8c4f0" stroke="#2a4fa8" /><path d="M5 7V3a3 3 0 0 1 6 0v4" stroke="#111" strokeWidth="1.500" fill="none" /><path d="M8 7v8" stroke="#d63a3a" strokeWidth="1.500" /></>,
  split: <><rect x="1" y="5" width="14" height="9" fill="#9db2f2" stroke="#3a4fc0" /><path d="M1 8h14" stroke="#3a4fc0" /><path d="M7 5v9M10 5v9" stroke="#d63a3a" /></>,
  delBody: <><path d="M6 7l5-3 4 2v6l-5 3-4-2z" fill="#8ec0f5" stroke="#4a80d0" strokeWidth=".5" /><path d="M1 1l9 10M10 1L2 10" stroke="#222" strokeWidth="1.500" /></>,
  iso: <><path d="M1 7l7-6 7 6-7 5z" fill="#6a78e0" stroke="#2a3580" /><path d="M3 5l7 6M5 3l7 6M11 3L5 9M13 5L7 11" stroke="#fff" strokeWidth=".8" /><path d="M1 12q1 3 3 1t3 2M10 15q2-1 2-3" stroke="#222" fill="none" /></>,
  bridge: <><path d="M6 2H3Q1 2 1 5t2 3M3 15Q1 14 1 11t2-2" stroke="#111" fill="none" /><path d="M12 2q3 0 3 3M3 15l12-6" stroke="#d63a3a" /><path d="M11 3v9" stroke="#33a" strokeDasharray="1 1" /><path d="M8 5v4H6l2 2 2-2H8z" fill="#d63a3a" /></>,
};

type Node = { name: string; n: string; icon: string; muted?: boolean; info?: boolean; bold?: boolean };
const nodes: Node[] = [
  { name: "点", n: "(8)", icon: "point", muted: true },
  { name: "点", n: "(9)", icon: "point", muted: true },
  { name: "草图", n: '(10) "SKETCH_', icon: "sketch", muted: true },
  { name: "拉伸", n: "(11)", icon: "extrude" },
  { name: "拉伸", n: "(12)", icon: "extrude" },
  { name: "相交", n: "(13)", icon: "intersect" },
  { name: "复合曲线", n: "(18)", icon: "curve", muted: true },
  { name: "复合曲线", n: "(19)", icon: "curve", muted: true, info: true },
  { name: "拉伸", n: "(23)", icon: "extrude" },
  { name: "拉伸", n: "(24)", icon: "extrude" },
  { name: "相交", n: "(25)", icon: "intersect" },
  { name: "删除面", n: "(26)", icon: "delFace" },
  { name: "填充曲面", n: "(28)", icon: "fill" },
  { name: "修剪体", n: "(29)", icon: "trim" },
  { name: "拉伸", n: "(30)", icon: "extrude", muted: true },
  { name: "边倒圆", n: "(31)", icon: "blend" },
  { name: "填充曲面", n: "(32)", icon: "fill" },
  { name: "镜像几何体", n: "(33)", icon: "mirror" },
  { name: "缝合", n: "(34)", icon: "sew" },
  { name: "取消缝合", n: "(36)", icon: "unsew" },
  { name: "拉伸", n: "(37)", icon: "extrude", muted: true },
  { name: "修剪体", n: "(38)", icon: "trim" },
  { name: "拆分体", n: "(39)", icon: "split" },
  { name: "拆分体", n: "(40)", icon: "split" },
  { name: "删除体", n: "(41)", icon: "delBody" },
  { name: "等参数曲线", n: "(42)", icon: "iso", muted: true },
  { name: "桥接曲线", n: "(43)", icon: "bridge", muted: true },
  { name: "拉伸", n: "(44)", icon: "extrude", muted: true },
  { name: "填充曲面", n: "(45)", icon: "fill" },
  { name: "镜像几何体", n: "(46)", icon: "mirror" },
  { name: "缝合", n: "(47)", icon: "sew" },
  { name: "缝合", n: "(48)", icon: "sew" },
  { name: "删除面", n: "(49)", icon: "delFace" },
  { name: "边倒圆", n: "(50)", icon: "blend", bold: true },
];

const GreenCheck: React.FC<{ s?: number }> = ({ s = 11 }) => (
  <Svg s={s} v="0 0 11 11"><path d="M1 5.500l3 3.500 6-8" fill="none" stroke="#1fb52c" strokeWidth="2.600" /></Svg>
);
const SurfaceIcon: React.FC<{ s?: number }> = ({ s = 20 }) => (
  <Svg s={s} v="0 0 24 18">
    <path d="M1 10Q8 7 14 1q5 3 9 7-6 3-11 9-5-5-11-7z" fill="#cfe6cf" stroke="#2f7d4a" strokeWidth="1.300" />
    <path d="M6 9q6-2 10-6M10 12q6-2 9-6M9 5l8 7M5 8l7 6" stroke="#7fb08f" strokeWidth=".7" fill="none" />
  </Svg>
);

const Part3D = () => (
  <CanvasSvg viewBox="225 173 1154 712" preserveAspectRatio="xMinYMin slice">
    <defs>
      <linearGradient id="topFace" gradientUnits="userSpaceOnUse" x1="795" y1="560" x2="1265" y2="500">
        <stop offset="0" stopColor="#ffe835" /><stop offset=".25" stopColor="#ffdd2a" />
        <stop offset=".6" stopColor="#ffc615" /><stop offset="1" stopColor="#ffba0c" />
      </linearGradient>
      <linearGradient id="ballBase" gradientUnits="userSpaceOnUse" x1="845" y1="510" x2="950" y2="610">
        <stop offset="0" stopColor="#a87438" /><stop offset=".55" stopColor="#f0a452" /><stop offset="1" stopColor="#ffb65c" />
      </linearGradient>
      <radialGradient id="ballHi" gradientUnits="userSpaceOnUse" cx="892" cy="571" r="46">
        <stop offset="0" stopColor="#ffff82" /><stop offset="1" stopColor="#ffc860" stopOpacity="0" />
      </radialGradient>
      <radialGradient id="ballDark" gradientUnits="userSpaceOnUse" cx="938" cy="495" r="34">
        <stop offset="0" stopColor="#5e3f17" /><stop offset="1" stopColor="#a87438" stopOpacity="0" />
      </radialGradient>
      <linearGradient id="slotWall" gradientUnits="userSpaceOnUse" x1="1078" y1="473" x2="1083" y2="508">
        <stop offset="0" stopColor="#5e3f17" /><stop offset=".22" stopColor="#8a6230" /><stop offset=".6" stopColor="#dca052" /><stop offset="1" stopColor="#ffbf62" />
      </linearGradient>
      <linearGradient id="endWall" gradientUnits="userSpaceOnUse" x1="1180" y1="510" x2="1216" y2="505">
        <stop offset="0" stopColor="#ffc062" /><stop offset=".6" stopColor="#e8a656" /><stop offset="1" stopColor="#a06a30" />
      </linearGradient>
      <linearGradient id="neck" gradientUnits="userSpaceOnUse" x1="955" y1="490" x2="965" y2="600">
        <stop offset="0" stopColor="#7a5222" /><stop offset=".3" stopColor="#f0ab58" /><stop offset=".75" stopColor="#ffd870" /><stop offset="1" stopColor="#ffb55a" />
      </linearGradient>
      <clipPath id="recess">
        <path d="M947 486L968 490L1184 457Q1200 455 1204 470L1218 540Q1220 558 1198 567L975 597Q968 598 965 605A73.500 73.500 0 1 1 947 486z" />
      </clipPath>
    </defs>
    <path d="M729 433L769 706 765 728 725 456z" fill="#a26500" />
    <path d="M769 706L1325 629 1321 652 765 728z" fill="#653d00" />
    <path d="M729 433L1283 356 1325 629 769 706z" fill="url(#topFace)" />
    <path d="M729 433L793 424 834 697 769 706z" fill="#ffbe0a" />
    <path d="M1218 365L1283 356 1325 629 1260 637z" fill="#ffbe0c" />
    <g clipPath="url(#recess)">
      <rect x="830" y="450" width="400" height="170" fill="url(#ballBase)" />
      <circle cx="892" cy="571" r="46" fill="url(#ballHi)" />
      <circle cx="938" cy="495" r="34" fill="url(#ballDark)" />
      <path d="M947 484L968 488 985 600 962 608z" fill="url(#neck)" />
      <path d="M968 488L1190 452 1222 560 975 600z" fill="#ffc164" />
      <path d="M968 488L1190 452 1195 486 972 522z" fill="url(#slotWall)" />
      <path d="M1182 455L1210 460 1222 550 1198 566 1186 490z" fill="url(#endWall)" />
      <path d="M978 584L1198 553 1204 566 975 600z" fill="#ffd468" />
    </g>
    <g stroke="#f0a254" strokeWidth="2.500" fill="none">
      <path d="M970 519L1187 487M1187 487L1216 483M981 586L1198 553 1216 548M980 597L1200 566" />
      <path d="M1180 458L1200 565M969 493L982 597M968 489L1186 456" />
    </g>
    <g stroke="#6a4c1c" strokeWidth="1.500" fill="none">
      <path d="M968 493L1188 459" />
      <path d="M913 558L967 553" />
    </g>
    <g stroke="#30c530" strokeWidth="1.600" fill="none">
      <path d="M903 478Q905 550 926 623" />
      <path d="M946 485L948 520 957 545 963 605" />
      <path d="M967 492L982 597" />
      <path d="M946 485L968 490L1184 457" strokeWidth="1" />
      <path d="M1184 457Q1200 455 1204 470L1218 540Q1220 558 1198 567" strokeWidth="2.400" strokeDasharray="6 1" />
      <path d="M1187 487L1198 563" strokeWidth="1.600" strokeDasharray="4 2" />
    </g>
    <g stroke="#7a6a3c" strokeWidth="1.400" fill="none">
      <circle cx="916" cy="555" r="5" />
      <circle cx="965" cy="550" r="5" />
    </g>
    <text x="918" y="553" fontFamily="Liberation Sans" fontSize="13" fill="#8a7038">G1 Max 0.0409</text>
    <text x="967" y="547" fontFamily="Liberation Sans" fontSize="13" fill="#6f6530">G0 Max 0.0009</text>
  </CanvasSvg>
);

const Logo = () => (
  <Svg w={72} h={84} v="0 0 72 84">
    <path d="M36 42L36 1 71 22z" fill="#6c8fa3" />
    <path d="M36 42L71 22V62z" fill="#22719a" />
    <path d="M36 42L71 62 36 83z" fill="#135f8a" />
    <path d="M36 42L36 83 1 62z" fill="#1d6b94" />
    <path d="M36 42L1 62V22z" fill="#4f86a2" />
    <path d="M36 42L1 22 36 1z" fill="#5f90a8" />
    <g fill="none" stroke="#232428" strokeWidth="1.500">
      <path d="M9 18Q36 12 53 26" />
      <path d="M50 6Q65 30 55 50" />
      <path d="M71 53Q50 70 33 62" />
      <path d="M30 82Q14 62 20 42" />
      <path d="M1 40Q10 22 30 20" />
    </g>
    <path d="M36 18L57 30V54L36 66 15 54V30z" fill="#232428" />
    <path d="M36 25L51 33.500 36 42 21 33.500z" fill="#2f5f78" />
    <path d="M21 34.500L35.500 43V60L21 51.500z" fill="#417a98" />
    <path d="M51 34.500L36.500 43V60L51 51.500z" fill="#12618c" />
  </Svg>
);

export default function App() {
  return (
    <Page>
      <Global />
      <Ribbon>
        <RibbonRow>
          <RibbonGroup $w={170}>
            <GroupBody>
              <BigButton $w={44} $mr={9}><BigIcon><IcAngleBig /></BigIcon><BigLabel>简单角度</BigLabel></BigButton>
              <SmallColumn $mr={11}>
                <Small gap={4} icon={<IcDist />}>测量距离</Small>
                <Small gap={4} icon={<IcMAngle />}>测量角度</Small>
                <Small gap={4} icon={<IcRadius />}>局部半径</Small>
              </SmallColumn>
              <BigButton $w={37}><MoreBox><IcRuler /></MoreBox><BigLabel>更多</BigLabel><Caret $size={3} /></BigButton>
            </GroupBody>
            <GroupFoot $pl={0}><FootLabel $shift={10}>测量</FootLabel><FootCaret /></GroupFoot>
          </RibbonGroup>
          <RibbonGroup $w={429} $pl={13}>
            <GroupBody>
              <BigButton $w={44} $mr={8}><BigIcon><IcPoles /></BigIcon><BigLabel>显示极点</BigLabel></BigButton>
              <BigButton $w={44}><BigIcon><IcKnots /></BigIcon><BigLabel>显示结点</BigLabel></BigButton>
            </GroupBody>
          </RibbonGroup>
          <RibbonGroup $w={181} $pl={12}>
            <GroupBody>
              <BigButton $w={44} $mr={13}><BigIcon><IcSection /></BigIcon><BigLabel>截面分析</BigLabel></BigButton>
              <BigButton $w={22} $mr={15}><BigIcon><IcReflect /></BigIcon><BigLabel>反射</BigLabel></BigButton>
              <SmallColumn>
                <Small gap={4} icon={<IcHigh />}>高亮线</Small>
                <Small gap={4} icon={<IcDraft />}>拔模分析</Small>
                <Small gap={4} icon={<IcCurv />}>面曲率</Small>
              </SmallColumn>
            </GroupBody>
            <GroupFoot $pl={12}><FootLabel>面形状</FootLabel><FootCaret /></GroupFoot>
          </RibbonGroup>
          <RibbonGroup $w={151} $pl={12}>
            <GroupBody>
              <BigButton $w={44} $mr={11}><BigIcon><IcDeviation /></BigIcon><BigLabel>偏差度量</BigLabel></BigButton>
              <SmallColumn>
                <Small gap={2} icon={<IcFaceX />}>曲面相交</Small>
                <Small gap={2} icon={<IcFaceCont />}>曲面连续性</Small>
                <Small gap={2} icon={<IcCurveCont />}>曲线连续性</Small>
              </SmallColumn>
            </GroupBody>
            <GroupFoot $pl={12}><FootLabel>关系</FootLabel><FootCaret /></GroupFoot>
          </RibbonGroup>
          <RibbonGroup $w={161} $pl={14}>
            <GroupBody>
              <BigButton $w={28} $mr={9}><BigIcon><IcWall /></BigIcon><BigLabel>壁厚</BigLabel></BigButton>
              <SmallColumn>
                <Small gap={3} icon={<IcExt />}>延展角度</Small>
                <Small gap={3} icon={<IcPrint />}>可打印空间体</Small>
                <Small gap={3} icon={<IcClosed />}>完全封闭空间体</Small>
              </SmallColumn>
            </GroupBody>
            <GroupFoot $pl={14}><FootLabel>增材制造设计验证</FootLabel><FootCaret /></GroupFoot>
          </RibbonGroup>
          <RibbonGroup $w={43} $pl={3}>
            <GroupBody>
              <BigButton $w={37}><MoreBox><IcRulerRainbow /></MoreBox><BigLabel>更多</BigLabel><Caret $size={3} /></BigButton>
            </GroupBody>
          </RibbonGroup>
        </RibbonRow>
      </Ribbon>

      <Toolbar>
        <MenuButton>
          <Svg w={16} h={26} v="0 0 16 26">
            <rect x="-6" y="2" width="20" height="6" fill="#5b7fd0" />
            <path d="M-2 6L12 16 6 17 10 24 6 25 3 18 -2 22z" fill="#bdbdbd" stroke="#666" />
          </Svg>
          <MenuLabel>菜单(<u>M</u>)</MenuLabel>
          <Caret $size={3} />
        </MenuButton>
        {toolLeft}
        <ToolGap />
        {toolRight}
      </Toolbar>

      <Main>
        <Rail>
          <RailPiece />
          <RailPiece $grow />
        </Rail>
        <Navigator>
          <NavTitle>部件导航器<MaximizeBox /></NavTitle>
          <NavFrame>
            <GridHead>
              <NameCell>名称<UpTri /></NameCell>
              <HeadEnd />
            </GridHead>
            <GridBody>
              <Rows>
                {nodes.map((node, i) => (
                  <TreeRow key={i} $alt={i % 2 === 1}>
                    <Connector $last={i === nodes.length - 1} />
                    <Check><GreenCheck /></Check>
                    <NodeIcon><Svg v="0 0 16 16">{nodeIcons[node.icon]}</Svg></NodeIcon>
                    {node.info && <InfoBadge>i</InfoBadge>}
                    <NodeText $muted={node.muted} $bold={node.bold}>{node.name} {node.n}</NodeText>
                  </TreeRow>
                ))}
              </Rows>
              <ScrollBar>
                <ScrollEnd><ScrollUp /></ScrollEnd>
                <ScrollSpace />
                <ScrollThumb><GripLine /><GripLine /><GripLine /></ScrollThumb>
                <ScrollEnd><DownTri /></ScrollEnd>
              </ScrollBar>
            </GridBody>
          </NavFrame>
        </Navigator>
        <Workspace>
          <TabStrip>
            <PartTab>
              <Svg s={18} v="0 0 16 16">
                <path d="M2 5l6-3 6 3v7l-6 3-6-3z" fill="#1f5fd8" />
                <path d="M8 2l6 3-6 3-6-3z" fill="#6ea4f5" />
                <path d="M6 8l4-2v5l-4 2z" fill="#fff" />
              </Svg>
            </PartTab>
          </TabStrip>
          <Canvas>
            <Part3D />
            <Watermark>
              <Logo />
              <MarkText>
                <MarkTitle>3D世界网</MarkTitle>
                <MarkSub>WWW.3DSJW.COM</MarkSub>
              </MarkText>
            </Watermark>
          </Canvas>
        </Workspace>
      </Main>

      <Dialog>
        <TitleBar>
          <Svg s={14} v="0 0 14 14">
            <circle cx="7" cy="7" r="3.800" fill="none" stroke="#fff" strokeWidth="2.500" />
            <path d="M7 0v3M7 11v3M0 7h3M11 7h3M2 2l2 2M10 10l2 2M2 12l2-2M10 4l2-2" stroke="#fff" strokeWidth="2" />
          </Svg>
          <TitleText>曲面连续性</TitleText>
          <TitleTools>
            <Svg s={13} v="0 0 13 13">
              <path d="M3.500 3A5 5 0 1 0 10 3" fill="none" stroke="#fff" strokeWidth="1.800" transform="rotate(-20 6.500 7)" />
              <path d="M1 1l5 .5-3 3.500z" fill="#fff" />
            </Svg>
            <Svg s={13} v="0 0 13 13"><path d="M1.500 1.500l10 10M11.500 1.500l-10 10" stroke="#fff" strokeWidth="2" /></Svg>
          </TitleTools>
        </TitleBar>
        <Sections>
          <Section $h={64}>
            <SectionHead>类型<Chevron /></SectionHead>
            <SelectBox $mt={4}>
              <SurfaceIcon /><Grow>多面</Grow><Caret />
            </SelectBox>
          </Section>

          <Section $h={70}>
            <SectionHead>对照对象<Chevron /></SectionHead>
            <YellowRow>
              <YellowBar><GreenCheck s={14} /><span>选择面 (54)</span></YellowBar>
              <YellowButton><SurfaceIcon s={28} /></YellowButton>
            </YellowRow>
          </Section>

          <Section $h={105}>
            <SectionHead>连续性检查<Chevron /></SectionHead>
            <CheckGrid>
              <Box on><SpacedLabel>G0 ( 位置 )</SpacedLabel></Box>
              <Box on><SpacedLabel>G1 ( 相切 )</SpacedLabel></Box>
              <Box><SpacedLabel>G2 ( 曲率 )</SpacedLabel></Box>
              <Box><SpacedLabel>G3 ( 流 )</SpacedLabel></Box>
            </CheckGrid>
            <Row>没有任何边超出公差</Row>
          </Section>

          <Section $h={272}>
            <SectionHead>分析显示<Chevron /></SectionHead>
            <CheckGrid>
              <Box on>显示连续性针</Box><span />
              <Box on>建议比例因子</Box><span />
            </CheckGrid>
            <Row $mt={2}>
              针比例
              <RightControls>
                <Slider><SliderThumb $left={0} /></Slider>
                <NumberField $w={82}><NumberText $cut={2}>42032289'</NumberText></NumberField>
              </RightControls>
            </Row>
            <Row $mt={3}>
              采样距离
              <RightControls>
                <Slider><SliderThumb $left={11} /></Slider>
                <NumberField $w={82}><NumberText $cut={9}>1.000000</NumberText></NumberField>
              </RightControls>
            </Row>
            <Divider $mt={3} />
            <Row $mt={1}>
              显示标签
              <RightControls $gap={8}>
                <Box>最小值</Box>
                <Box on>最大值</Box>
              </RightControls>
            </Row>
            <Row $h={25} $mt={2}>
              报告每个
              <SelectBox $w={141} $h={25}><Grow>分析对象</Grow><Caret /></SelectBox>
            </Row>
            <Row $h={31} $mt={2}>
              指定值标签的位置 (0)
              <Crosshair>
                <Svg s={20} v="0 0 20 20">
                  <circle cx="10" cy="10" r="5" fill="none" stroke="#e01818" strokeWidth="1.300" />
                  <path d="M10 0v20M0 10h20" stroke="#111" />
                </Svg>
              </Crosshair>
            </Row>
            <Divider $mt={3} />
            <StackedChecks>
              <Box on>公差批注</Box>
              <Box>仅显示超出公差</Box>
            </StackedChecks>
          </Section>

          <Section $h={268}>
            <SectionHead>设置<Chevron /></SectionHead>
            <InnerStack>
              <Inner $h={90}>
                <InnerHead>阈值<Chevron s={10} /></InnerHead>
                <Row $h={24} $mt={7}>
                  距离
                  <SelectBox $w={140} $h={24}><ValueText>0.01</ValueText><UnitText>mm</UnitText><Caret /></SelectBox>
                </Row>
                <Row $h={24} $mt={3}>
                  斜角
                  <SelectBox $w={140} $h={24}><ValueText>0.05</ValueText><UnitText>°</UnitText><Caret /></SelectBox>
                </Row>
              </Inner>
              <Inner $h={137}>
                <InnerHead>公差<Chevron s={10} /></InnerHead>
                <Row $mt={7}><SpacedLabel>G0 ( 位置 )</SpacedLabel><NumberField $w={81}><NumberText $cut={4}>0.00100</NumberText></NumberField></Row>
                <Row $mt={2}><SpacedLabel>G1 ( 相切 )</SpacedLabel><NumberField $w={81}><NumberText $cut={4}>0.05000</NumberText></NumberField></Row>
                <Row $mt={2}><SpacedLabel>G2 ( 曲率 )</SpacedLabel><NumberField $w={81}><NumberText $cut={4}>0.05000</NumberText></NumberField></Row>
                <Row $mt={2}><SpacedLabel>G3 ( 流 )</SpacedLabel><NumberField $w={81}><NumberText $cut={4}>0.50000</NumberText></NumberField></Row>
              </Inner>
            </InnerStack>
          </Section>
        </Sections>
        <Actions>
          <ActionButton $primary>确定</ActionButton>
          <ActionButton>应用</ActionButton>
          <ActionButton>取消</ActionButton>
        </Actions>
      </Dialog>
    </Page>
  );
}
